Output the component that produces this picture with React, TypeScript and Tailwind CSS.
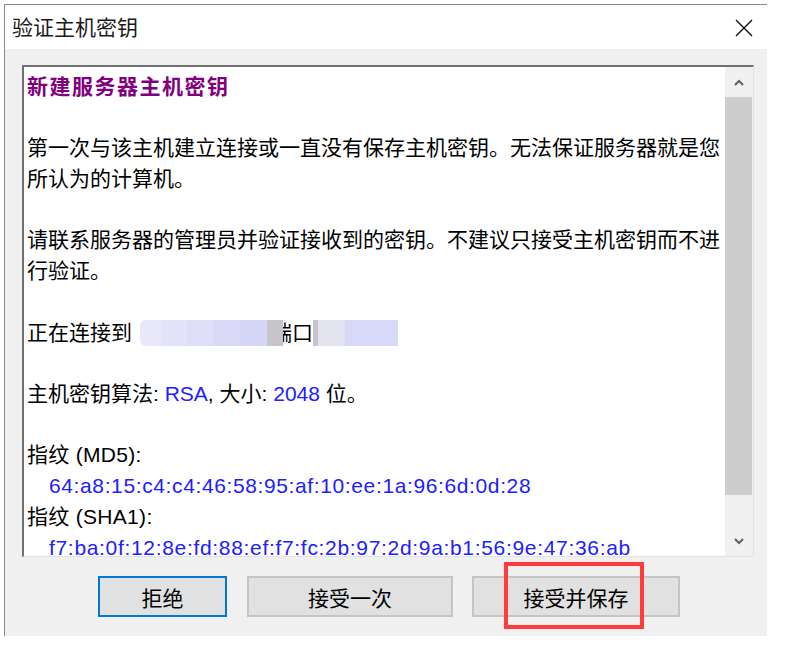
export default function App() {
  return (
    <div className="w-[797px] h-[658px] bg-white relative overflow-hidden font-['Liberation_Sans','Noto_Sans_CJK_SC',sans-serif] text-black">
      <div className="ml-[4px] mt-[4px] w-[763px] h-[632px] border-l border-t border-[#8a8a8a] flex flex-col">
        {/* Title bar */}
        <div className="h-[44px] shrink-0 bg-white flex items-center justify-between pl-[7px] pr-[14px]">
          <span className="text-[21px] leading-none text-[#1a1a1a] mt-[1px]">验证主机密钥</span>
          <svg width="18" height="18" viewBox="0 0 18 18" className="mt-[1px]">
            <path d="M1 1 L17 17 M17 1 L1 17" stroke="#111" strokeWidth="1.4" fill="none" />
          </svg>
        </div>
        {/* Body */}
        <div className="flex-1 bg-[#f0f0f0] flex flex-col pl-[17px] pt-[16px]">
          {/* Text box */}
          <div className="w-[732px] h-[492px] shrink-0 bg-white border-t-2 border-l-2 border-t-[#707070] border-l-[#707070] border-r border-b border-r-[#e3e3e3] border-b-[#e3e3e3] flex">
            <div className="flex-1 pl-[3px] pt-[5px] text-[21px] leading-[30.7px] whitespace-nowrap">
              <div className="font-bold text-[#800080] tracking-[1.5px]">新建服务器主机密钥</div>
              <div className="h-[30.7px]" />
              <div>第一次与该主机建立连接或一直没有保存主机密钥。无法保证服务器就是您</div>
              <div>所认为的计算机。</div>
              <div className="h-[30.7px]" />
              <div>请联系服务器的管理员并验证接收到的密钥。不建议只接受主机密钥而不进</div>
              <div>行验证。</div>
              <div className="h-[30.7px]" />
              <div className="h-[30.7px] flex items-center">
                <span>正在连接到</span>
                <span className="ml-[8px] flex h-[26px]">
                  <span className="w-[22px] bg-[#e8e8fa] rounded-l-[6px]" />
                  <span className="w-[25px] bg-[#e2e2f9]" />
                  <span className="w-[26px] bg-[#dedef9]" />
                  <span className="w-[27px] bg-[#dadaf8]" />
                  <span className="w-[27px] bg-[#d6d6f6]" />
                  <span className="w-[16px] bg-[#c6c6ca] relative z-10" />
                </span>
                <span className="ml-[-12px]">端口</span>
                <span className="flex h-[26px]">
                  <span className="w-[5px] bg-[#c6c6ca]" />
                  <span className="w-[27px] bg-[#e4e4f0]" />
                  <span className="w-[53px] bg-[#d8d8f8]" />
                </span>
              </div>
              <div className="h-[30.7px]" />
              <div>
                主机密钥算法: <span className="text-[#2020ff]">RSA</span>, 大小: <span className="text-[#2020ff]">2048</span> 位。
              </div>
              <div className="h-[30.7px]" />
              <div className="tracking-[0.3px]">指纹 (MD5):</div>
              <div className="pl-[22px] text-[#2020ff] tracking-[0.62px]">64:a8:15:c4:c4:46:58:95:af:10:ee:1a:96:6d:0d:28</div>
              <div className="tracking-[0.3px]">指纹 (SHA1):</div>
              <div className="pl-[22px] text-[#2020ff] tracking-[0.68px] leading-[14px] mt-[8.3px]">f7:ba:0f:12:8e:fd:88:ef:f7:fc:2b:97:2d:9a:b1:56:9e:47:36:ab</div>
            </div>
            {/* Scrollbar */}
            <div className="w-[28px] shrink-0 bg-[#f0f0f0] flex flex-col">
              <div className="h-[30px] flex items-center justify-center">
                <svg width="10" height="7" viewBox="0 0 10 7">
                  <path d="M1 6 L5 2 L9 6" stroke="#606060" strokeWidth="2" fill="none" />
                </svg>
              </div>
              <div className="h-[398px] bg-[#cdcdcd] mr-[1px]" />
              <div className="flex-1" />
              <div className="h-[30px] flex items-center justify-center">
                <svg width="10" height="7" viewBox="0 0 10 7">
                  <path d="M1 1 L5 5 L9 1" stroke="#606060" strokeWidth="2" fill="none" />
                </svg>
              </div>
            </div>
          </div>
          {/* Buttons */}
          <div className="mt-[19px] pl-[76px] flex text-[21px] leading-none">
            <div className="w-[129px] h-[41px] bg-[#e1e1e1] border-2 border-[#0078d7] flex items-center justify-center">
              <span className="mt-[4px]">拒绝</span>
            </div>
            <div className="ml-[20px] w-[206px] h-[41px] bg-[#e1e1e1] border-2 border-[#c4c4c4] flex items-center justify-center">
              <span className="mt-[4px]">接受一次</span>
            </div>
            <div className="ml-[19px] w-[208px] h-[41px] bg-[#e1e1e1] border-2 border-[#c4c4c4] flex items-center justify-center relative">
              <span className="mt-[4px]">接受并保存</span>
              <div className="absolute left-[30px] top-[-16px] w-[140px] h-[67px] border-4 border-[#ff3b3b]" />
            </div>
          </div>
        </div>
      </div>
    </div>
  );
}
